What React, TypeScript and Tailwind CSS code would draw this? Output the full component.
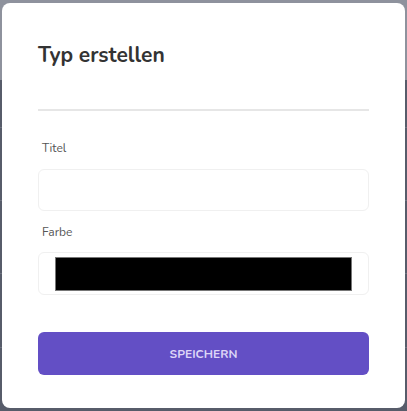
import React from 'react';

const App: React.FC = () => {
    return (
        <div className="relative h-[411px] w-[407px] overflow-hidden font-['Nunito','Lato',sans-serif]">
            {/* dimmed page behind the dialog */}
            <div className="flex h-full flex-col bg-[#575c6a]">
                <div className="h-[80px] bg-[#8e929d]" />
                <div className="h-[47px]" />
                <div className="h-[73px] border-t border-[#6e7380]" />
                <div className="h-[73px] border-t border-[#6e7380]" />
                <div className="h-[74px] border-t border-[#6e7380]" />
                <div className="flex-1 border-t border-[#6e7380]" />
            </div>

            <div className="absolute inset-0 px-[2px] pt-[3px] pb-[3px]">
                <div className="flex h-full flex-col rounded-lg bg-white px-9 pt-[37px]">
                    <h2 className="text-[21px] font-bold leading-[30px] text-[#333333]">Typ erstellen</h2>
                    <div className="mt-[39px] h-[2px] bg-[#e6e6e6]" />
                    <label className="mt-[29px] pl-1 text-[12px] leading-4 text-[#555555]">Titel</label>
                    <input
                        type="text"
                        className="mt-[13px] block h-[42px] w-full rounded-md border border-[#f0f0f0] px-3 text-sm outline-none"
                    />
                    <label className="mt-[13px] pl-1 text-[12px] leading-4 text-[#555555]">Farbe</label>
                    <div className="mt-[12px] flex h-[43px] items-center rounded-md border border-[#f0f0f0] px-4">
                        <div className="h-[34px] w-full border border-[#777777] bg-black" />
                    </div>
                    <button
                        type="button"
                        className="mt-[37px] flex h-[43px] w-full items-center justify-center rounded-md bg-[#634fc5] text-[12px] font-bold text-[#ddd6f7]"
                    >
                        SPEICHERN
                    </button>
                </div>
            </div>
        </div>
    );
};

export default App;
